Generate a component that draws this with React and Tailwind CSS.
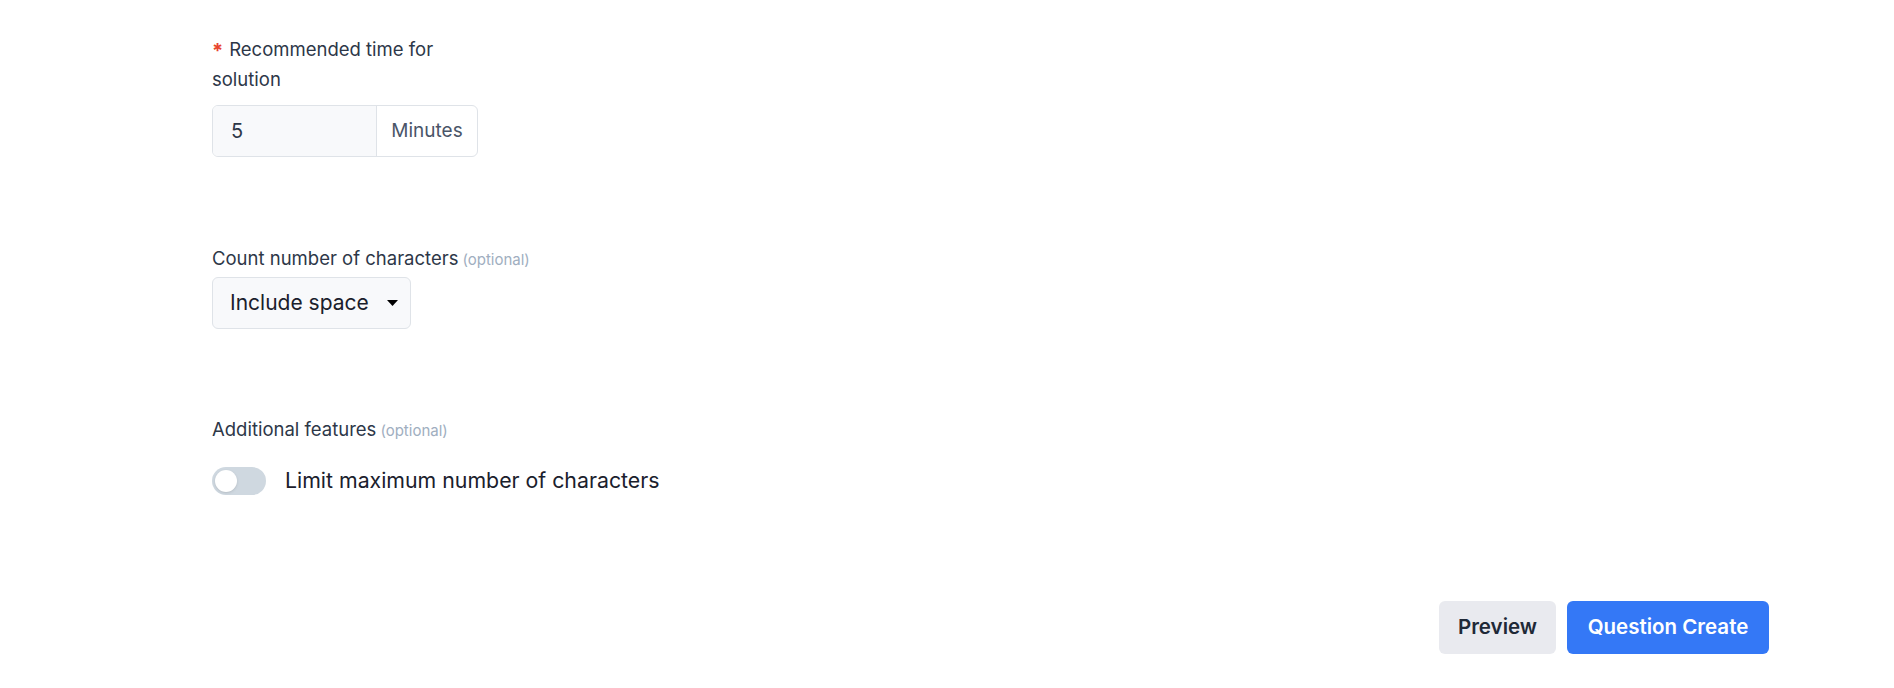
import React, { useState } from "react";

const Optional = () => (
  <span className="text-[15px] text-[#a0aec0] ml-1">(optional)</span>
);

const App = () => {
  const [minutes, setMinutes] = useState("5");
  const [limit, setLimit] = useState(false);

  return (
    <div
      className="w-full h-[688px] bg-white flex flex-col pl-[212px] pr-[125px] text-[#2d3748]"
      style={{ fontFamily: "Inter, 'Noto Sans', sans-serif" }}
    >
      {/* recommended time */}
      <div className="w-[266px] pt-[34px]">
        <label className="block text-[18.5px] leading-[30px]">
          <span className="inline-block text-[#e8452f] font-bold text-[20px] leading-none mr-[6px] align-[-2px]">*</span>
          Recommended time for solution
        </label>
        <div className="mt-[11px] flex h-[52px] border border-[#dfe3e8] rounded-md overflow-hidden">
          <input
            value={minutes}
            onChange={(e) => setMinutes(e.target.value)}
            className="w-[163px] bg-[#f8f9fb] px-[18px] text-[20px] text-[#2d3748] outline-none"
          />
          <div className="flex-1 flex items-center justify-center border-l border-[#dfe3e8] text-[19px] text-[#4a5568]">
            Minutes
          </div>
        </div>
      </div>

      {/* count characters */}
      <div className="mt-[87px]">
        <div className="text-[18.5px] leading-[28px]">
          Count number of characters
          <Optional />
        </div>
        <div className="mt-[3px] w-[199px] h-[52px] border border-[#dfe3e8] rounded-md bg-[#f8f9fb] flex items-center justify-between pl-[17px] pr-[12px] cursor-pointer">
          <span className="text-[21px] text-[#1a202c]">Include space</span>
          <svg width="11" height="6" viewBox="0 0 11 6">
            <path d="M0 0h11L5.5 6z" fill="#000" />
          </svg>
        </div>
      </div>

      {/* additional features */}
      <div className="mt-[86px]">
        <div className="text-[18.5px] leading-[28px]">
          Additional features
          <Optional />
        </div>
        <div className="mt-[20px] flex items-center gap-[19px]">
          <button
            onClick={() => setLimit(!limit)}
            className={`w-[54px] h-[28px] rounded-full p-[3px] flex ${
              limit ? "bg-[#3478f6] justify-end" : "bg-[#cfd8e0] justify-start"
            }`}
          >
            <span className="w-[22px] h-[22px] rounded-full bg-white shadow-sm" />
          </button>
          <span className="text-[21.3px] text-[#1a202c]">Limit maximum number of characters</span>
        </div>
      </div>

      {/* actions */}
      <div className="mt-[104px] flex justify-end gap-[11px]">
        <button className="w-[117px] h-[53px] rounded-md bg-[#e9eaef] text-[20.5px] font-semibold text-[#1f2937]">
          Preview
        </button>
        <button className="w-[202px] h-[53px] rounded-md bg-[#3478f6] text-[20.5px] font-semibold text-white">
          Question Create
        </button>
      </div>
    </div>
  );
};

export default App;
